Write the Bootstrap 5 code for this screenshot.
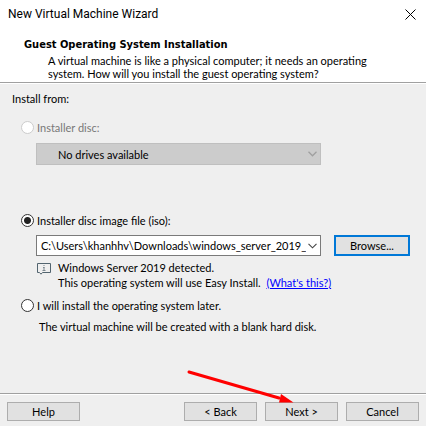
<!DOCTYPE html>
<html lang="en">
<head>
<meta charset="utf-8">
<meta name="viewport" content="width=device-width, initial-scale=1">
<title>New Virtual Machine Wizard</title>
<link rel="stylesheet" href="https://cdn.jsdelivr.net/npm/bootstrap@5.3.0/dist/css/bootstrap.min.css">
<style>
body { background: #efefef; color: #000; font: 11px/13px Lato, "Noto Sans", sans-serif; }
.titlebar { padding: 6px 9px 0 8px; font: 12px/16px Roboto, sans-serif; }
.close-btn { width: 12px; height: 16px; border: 0; background: none; }
.intro { padding: 16px 24px 2px; }
.intro h1 { font: 700 11px/13px "DejaVu Sans Condensed", "DejaVu Sans", sans-serif; margin-bottom: 3px; }
.intro p { padding-left: 24px; max-width: 348px; }
.rule { border-top: 1px solid #a0a0a0; border-bottom: 1px solid #fff; }
.content-area { padding: 8px 16px 0 12px; }
.choice { padding-left: 9px; gap: 3px; height: 14px; }
.disc-choice { margin-top: 15px; }
.choice input { appearance: none; width: 13px; height: 13px; margin: 0; border: 1px solid #333; border-radius: 50%; background: #fff; flex: none; }
.choice input:checked { background: radial-gradient(circle, #222 3px, #fff 4px); }
.choice input:disabled { border-color: #ccc; }
.choice input:disabled + label { color: #787878; }
.fields { padding-left: 24px; padding-top: 8px; }
.drive-fields { padding-top: 9px; }
.note { padding-top: 8px; padding-left: 27px; }
.combo { position: relative; width: 285px; }
.combo select { appearance: none; display: block; width: 100%; height: 21px; padding: 0 14px 0 4px; border: 1px solid #7a7a7a; border-radius: 0; background: #fff; color: #000; font: inherit; overflow: hidden; text-overflow: clip; }
.combo select:disabled { height: 22px; padding-left: 21px; border-color: #bfbfbf; background: #ccc; opacity: 1; }
.combo svg { position: absolute; right: 4px; top: 8px; pointer-events: none; }
.push { border: 1px solid #adadad; background: #e1e1e1; color: #000; width: 73px; height: 19px; padding: 0; line-height: 15px; }
.push.browse { width: 76px; height: 21px; border: 2px solid #0078d7; }
.combo-row { gap: 13px; }
.info-row { gap: 7px; padding-top: 4px; padding-left: 1px; line-height: 15px; }
.info-row svg { margin-top: 3px; }
.info-row a { color: #00f; margin-left: 3px; }
.footer-bar { padding: 7px 7px 5px; }
.pointer { position: absolute; right: 44px; bottom: 17px; pointer-events: none; }
</style>
<script src="https://cdn.jsdelivr.net/npm/bootstrap@5.3.0/dist/js/bootstrap.bundle.min.js"></script>
</head>
<body>
<form class="d-flex flex-column min-vh-100">
  <header class="bg-white">
    <div class="titlebar d-flex justify-content-between">
      <span>New Virtual Machine Wizard</span>
      <button type="button" class="close-btn d-flex align-items-center p-0" aria-label="Close">
        <svg width="11" height="11" viewBox="0 0 11 11" stroke="#000" fill="none"><path d="M.5.5l10 10M10.5.5l-10 10"/></svg>
      </button>
    </div>
    <div class="intro">
      <h1>Guest Operating System Installation</h1>
      <p class="mb-0">A virtual machine is like a physical computer; it needs an operating system. How will you install the guest operating system?</p>
    </div>
  </header>
  <div class="rule"></div>
  <main class="content-area flex-grow-1">
    <div>Install from:</div>
    <div class="choice disc-choice d-flex align-items-center">
      <input type="radio" name="source" id="disc" disabled><label for="disc">Installer disc:</label>
    </div>
    <div class="fields drive-fields">
      <div class="combo mb-5">
        <select disabled aria-label="Drive"><option>No drives available</option></select>
        <svg width="9" height="6" viewBox="0 0 9 6" fill="none" stroke="#a0a0a0" stroke-width="1.3"><path d="M.5.8l4 4 4-4"/></svg>
      </div>
    </div>
    <div class="choice d-flex align-items-center">
      <input type="radio" name="source" id="iso" checked><label for="iso">Installer disc image file (iso):</label>
    </div>
    <div class="fields">
      <div class="combo-row d-flex">
        <div class="combo">
          <select aria-label="Image file"><option>C:\Users\khanhhv\Downloads\windows_server_2019_</option></select>
          <svg width="9" height="6" viewBox="0 0 9 6" fill="none" stroke="#444" stroke-width="1.1"><path d="M.5.8l4 4 4-4"/></svg>
        </div>
        <button type="button" class="push browse">Browse...</button>
      </div>
      <div class="info-row d-flex">
        <svg width="14" height="12" viewBox="0 0 14 12" fill="none"><path d="M.5.5h13v9H5.500L4 11.200 2.500 9.500H.5z" stroke="#52646f"/><path d="M6.500 2.500h1M6 4.500h1.500M7 4v3.500M5.500 7.500h3" stroke="#7d8890"/></svg>
        <div>Windows Server 2019 detected.<br>This operating system will use Easy Install. <a href="#">(What's this?)</a></div>
      </div>
    </div>
    <div class="choice d-flex align-items-center mt-2">
      <input type="radio" name="source" id="later"><label for="later">I will install the operating system later.</label>
    </div>
    <div class="note">The virtual machine will be created with a blank hard disk.</div>
  </main>
  <div class="rule"></div>
  <footer class="footer-bar d-flex gap-2">
    <button type="button" class="push me-auto">Help</button>
    <button type="button" class="push">&lt; Back</button>
    <div class="position-relative d-flex">
      <button type="submit" class="push">Next &gt;</button>
      <svg class="pointer" width="108" height="36" viewBox="0 0 108 36"><path d="M3 4l90 26" stroke="#f00" stroke-width="3" stroke-linecap="round"/><path d="M95 26l12.500 8.500H93z" fill="#f00"/></svg>
    </div>
    <button type="button" class="push">Cancel</button>
  </footer>
</form>
</body>
</html>
